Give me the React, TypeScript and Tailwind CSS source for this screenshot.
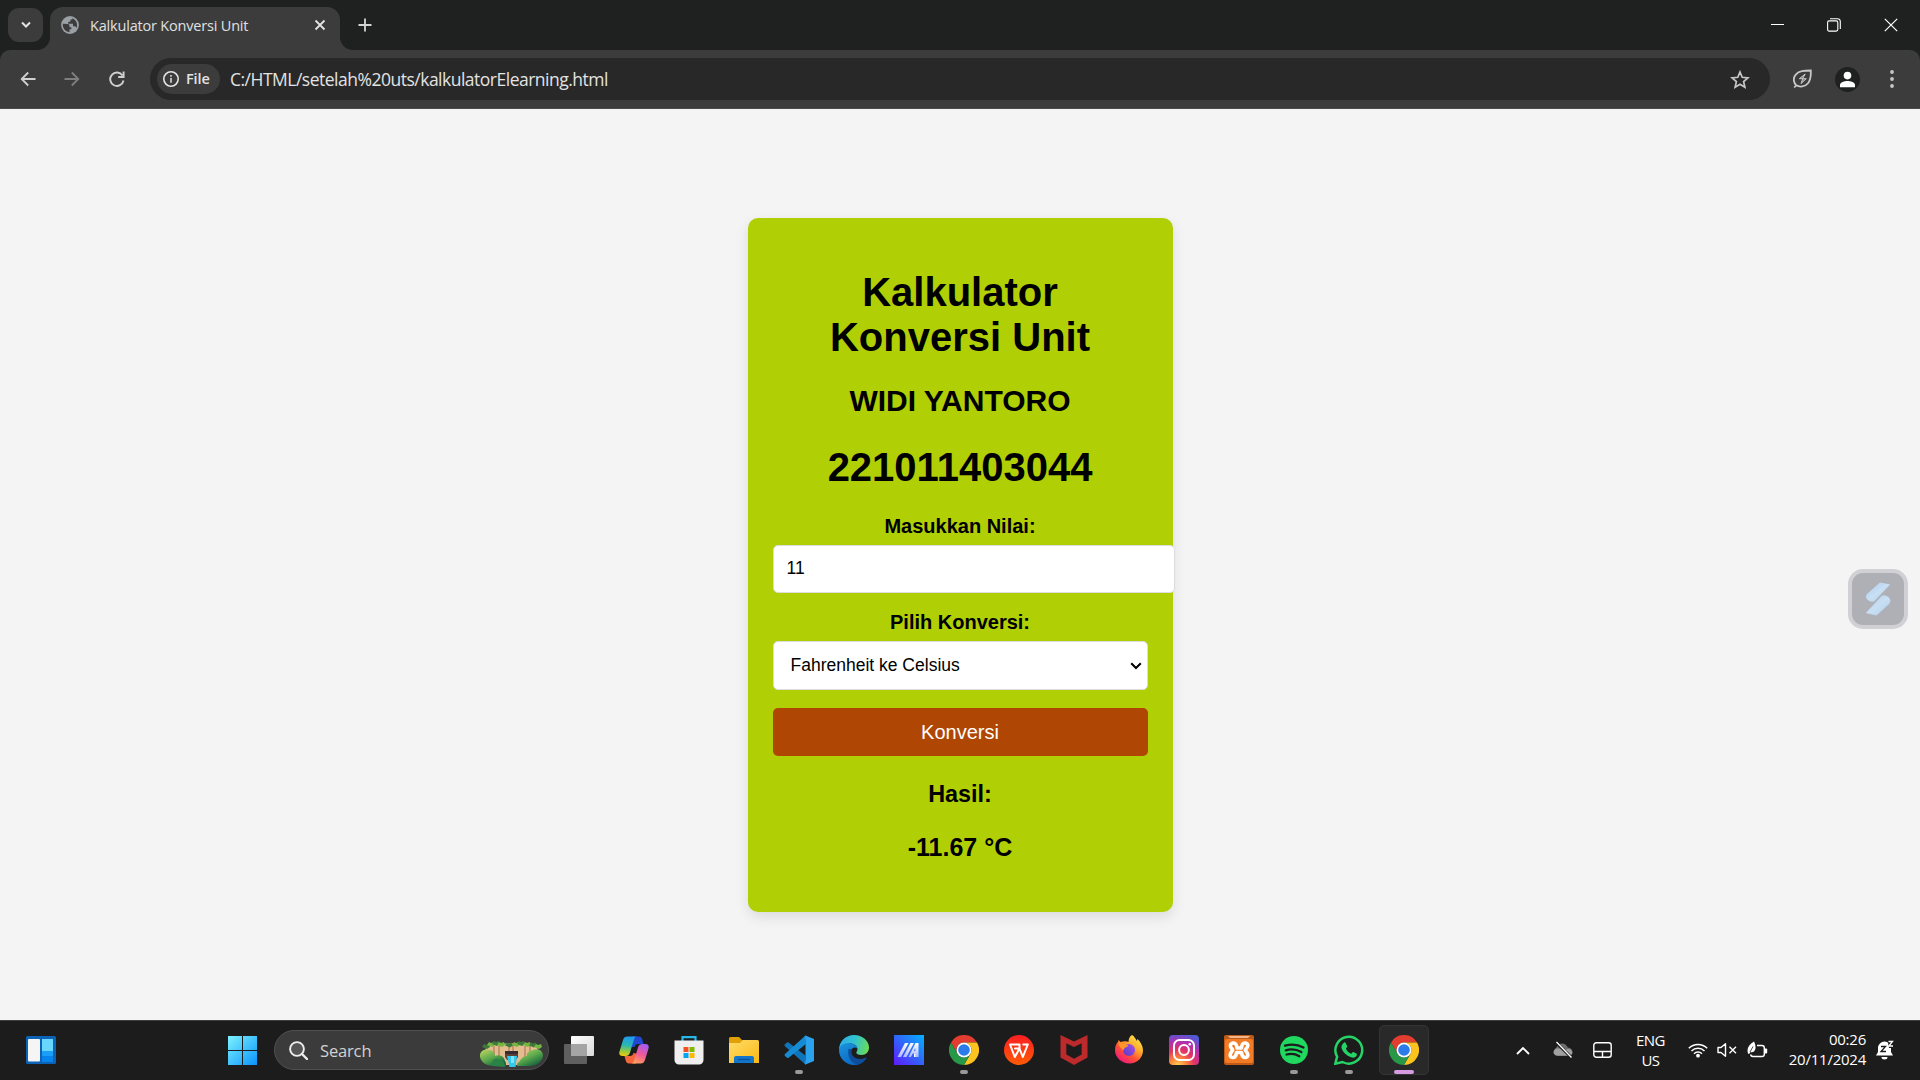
import React, { ReactNode } from "react";

function Svg({ w = 30, h = 30, children, className = "" }: { w?: number; h?: number; children: ReactNode; className?: string }) {
  return (
    <svg width={w} height={h} viewBox={`0 0 ${w} ${h}`} fill="none" className={`block shrink-0 ${className}`}>
      {children}
    </svg>
  );
}

function TabStrip() {
  return (
    <div className="flex h-[50px] bg-[#1f2121]">
      <div className="mt-2 ml-2 flex h-[34px] w-[35px] items-center justify-center rounded-[11px] bg-[#3c3c3c]">
        <Svg w={12} h={8}>
          <path d="M2 1.500l4 4 4-4" stroke="#e3e3e3" strokeWidth="2" />
        </Svg>
      </div>
      <div className="relative ml-[7px] mt-[7px] flex h-[43px] w-[290px] items-center rounded-t-[13px] bg-[#3c3c3c] pb-[7px] text-[#e0e0e0]">
        <Svg w={13} h={13} className="absolute -left-[13px] bottom-0">
          <path d="M13 0v13H0A13 13 0 0 0 13 0" fill="#3c3c3c" />
        </Svg>
        <Svg w={13} h={13} className="absolute -right-[13px] bottom-0">
          <path d="M0 0v13h13A13 13 0 0 1 0 0" fill="#3c3c3c" />
        </Svg>
        <Svg w={18} h={18} className="ml-[11px]">
          <circle cx="9" cy="9" r="8.9" fill="#9aa0a6" />
          <path d="M1.800 7.800l4.700.2c1.500 0 2 .8 2 2v1.200h1.800v2H8.500v3c-4.200-.4-7-3.800-6.700-8.400zM11.300 2.200c4 1.600 5.800 6 4.200 9.800l-1.200-1.700H12V7.700H7.200V6l2.200-.5V3.600h1.900z" fill="#3c3c3c" />
        </Svg>
        <span className="ml-[11px] mt-px w-[232px] whitespace-nowrap text-[14.500px] tracking-[-0.19px]">Kalkulator Konversi Unit</span>
        <Svg w={12} h={12} className="mr-[14px]">
          <path d="M1.500 1.500l9 9m0-9l-9 9" stroke="#e3e3e3" strokeWidth="1.800" />
        </Svg>
      </div>
      <Svg w={14} h={14} className="ml-[18px] mt-[18px]">
        <path d="M7 .5v13M.5 7h13" stroke="#d4d4d4" strokeWidth="1.800" />
      </Svg>
      <div className="ml-auto mr-[22px] flex h-[49px] items-center">
        <Svg w={13} h={13} className="mr-[43px]">
          <path d="M0 6.500h13" stroke="#fff" strokeWidth="1" />
        </Svg>
        <Svg w={14} h={14} className="mr-[43px]">
          <rect x=".6" y="2.900" width="10.200" height="10.200" rx="1.500" stroke="#fff" strokeWidth="1.100" />
          <path d="M3 .7h7.500a2.800 2.800 0 0 1 2.800 2.800V11" stroke="#fff" strokeWidth="1.100" />
        </Svg>
        <Svg w={14} h={14}>
          <path d="M.8.8l12.400 12.400m0-12.400L.8 13.200" stroke="#fff" strokeWidth="1.200" />
        </Svg>
      </div>
    </div>
  );
}

function Toolbar() {
  return (
    <div className="bg-[#1f2121]">
      <div className="flex h-[59px] items-center rounded-t-[10px] border-b border-[#4a4a4a] bg-[#3c3c3c]">
        <Svg w={16} h={16} className="ml-5">
          <path d="M15.500 8H2M8.200 1.500L1.700 8l6.500 6.500" stroke="#d0d0d0" strokeWidth="1.800" />
        </Svg>
        <Svg w={16} h={16} className="ml-[28px]">
          <path d="M.5 8H14M7.800 1.500L14.300 8l-6.500 6.500" stroke="#7e7e7e" strokeWidth="1.800" />
        </Svg>
        <Svg w={16} h={16} className="ml-[29px]">
          <path d="M13.500 4.500A6.700 6.700 0 1 0 14.500 9.500M14.600.5v5.500H9.200" stroke="#d0d0d0" strokeWidth="1.900" />
        </Svg>
        <div className="ml-[25px] flex h-[42px] w-[1620px] items-center rounded-full bg-[#282828] pl-[7px]">
          <div className="flex h-[30px] w-[63px] items-center rounded-full bg-[#3c3c3c] pl-[6px]">
            <Svg w={16} h={16}>
              <circle cx="8" cy="8" r="7.200" stroke="#e3e3e3" strokeWidth="1.600" />
              <path d="M8 7v4.800M8 4v1.800" stroke="#e3e3e3" strokeWidth="1.500" />
            </Svg>
            <span className="ml-[7px] text-[14.500px] font-semibold tracking-[-0.1px] text-[#e3e3e3]">File</span>
          </div>
          <span className="ml-[10px] whitespace-nowrap text-[17.500px] tracking-[-0.500px] text-[#e3e3e3]">C:/HTML/setelah%20uts/kalkulatorElearning.html</span>
          <Svg w={20} h={19} className="ml-auto mr-5">
            <path d="M10 2l2.200 5.300 5.700.5-4.300 3.800 1.300 5.600-4.900-3-4.900 3 1.300-5.600L2.100 7.800l5.700-.5z" stroke="#c7c7c7" strokeWidth="1.700" />
          </Svg>
        </div>
        <Svg w={20} h={20} className="ml-[23px]">
          <path d="M3.300 16.300A7.600 7.600 0 0 1 3 5.300C6 1.700 11 1.600 17.800 1.500c.2 4 .2 9-2.800 12.700-3 3.700-8.300 4.300-11.700 2.100l-2.100 2.200" stroke="#c7c7c7" strokeWidth="1.800" />
          <path d="M12.200 5L6.300 9.700h7L8 14.600l1.700-4.900z" stroke="#c7c7c7" strokeWidth="1" fill="#c7c7c7" fillOpacity=".5" />
        </Svg>
        <Svg w={25} h={25} className="ml-[22px]">
          <circle cx="12.500" cy="12.500" r="12.500" fill="#1f2121" />
          <circle cx="12.500" cy="8.600" r="3.800" fill="#fff" />
          <path d="M5 20.200v-2.400c0-2.600 4.500-3.900 7.500-3.900s7.500 1.300 7.500 3.900v2.400z" fill="#fff" />
        </Svg>
        <Svg w={4} h={20} className="ml-[30px]">
          <circle cx="2" cy="3" r="1.900" fill="#c7c7c7" />
          <circle cx="2" cy="10" r="1.900" fill="#c7c7c7" />
          <circle cx="2" cy="17" r="1.900" fill="#c7c7c7" />
        </Svg>
      </div>
    </div>
  );
}

function Calculator() {
  return (
    <div className="mt-[109px] flex h-[694px] w-[425px] flex-col rounded-[10px] bg-[#b1cf05] px-[25px] pt-[52px] text-center font-['Liberation_Sans',Arial,sans-serif] text-black shadow-[0_5px_13px_rgba(0,0,0,0.1)]">
      <h1 className="text-[40px] font-bold leading-[45px]">Kalkulator<br />Konversi Unit</h1>
      <h2 className="mt-[24px] text-[30px] font-bold leading-[34px]">WIDI YANTORO</h2>
      <h1 className="mt-[27px] text-[40px] font-bold leading-[45px]">221011403044</h1>
      <label className="mt-[25px] text-[20px] font-bold leading-[23px]">Masukkan Nilai:</label>
      <div className="mt-[7px] flex h-[48px] w-[402px] shrink-0 items-center rounded-[5px] border border-[#ddd] bg-white pl-[13px] pb-[1px] text-[17.500px]">11</div>
      <label className="mt-[18px] text-[20px] font-bold leading-[23px]">Pilih Konversi:</label>
      <div className="mt-[7px] flex h-[49px] w-full shrink-0 items-center justify-between rounded-[5px] border border-[#ddd] bg-white pl-[17px] pr-[5px] text-[17.500px]">
        Fahrenheit ke Celsius
        <Svg w={12} h={8}>
          <path d="M1.200 1.200L6 6l4.800-4.800" stroke="#000" strokeWidth="2" />
        </Svg>
      </div>
      <button className="mt-[18px] h-[48px] w-full shrink-0 rounded-[5px] bg-[#b04604] text-[20px] text-white">Konversi</button>
      <h3 className="mt-[25px] text-[23.400px] font-bold leading-[27px]">Hasil:</h3>
      <p className="mt-[25px] text-[25px] font-bold leading-[28px]">-11.67 °C</p>
    </div>
  );
}

function FloatingWidget() {
  return (
    <div className="absolute right-[12px] top-[460px] flex size-[60px] items-center justify-center rounded-[15px] border-4 border-[#d1d1d5] bg-[#afafb6]">
      <Svg w={26} h={34}>
        <defs>
          <linearGradient id="fw" x1="0" y1="0" x2="1" y2="1">
            <stop stopColor="#a9cdf0" />
            <stop offset=".5" stopColor="#c9dff3" />
            <stop offset="1" stopColor="#acd0f0" />
          </linearGradient>
        </defs>
        <path d="M15 .5l10.200 2L10 18.500c-1.500 1.700-3.500 1.600-5.500.5-4-2.200-4.500-5-2-7.500z" fill="url(#fw)" />
        <path d="M11.500 33.500L.8 31 16 14.500c1.500-1.500 4-1.400 6-.3 4 2.200 4.300 5.500 1.800 8z" fill="url(#fw)" />
      </Svg>
    </div>
  );
}

function WidgetsIcon() {
  return (
    <Svg w={30} h={28}>
      <rect width="30" height="28" rx="1.500" fill="#0c62b5" />
      <rect x="2" y="3" width="12" height="22.500" rx="1" fill="#f5f5f5" />
      <path d="M16 3h11v12H16z" fill="#69d6ff" />
      <path d="M16 15h11v5.500H16z" fill="#1d9dfa" />
      <path d="M16 20.500h11V26H16z" fill="#0584ee" />
    </Svg>
  );
}

function StartIcon() {
  return (
    <Svg w={29} h={29}>
      <defs>
        <linearGradient id="st" x1="0" y1="0" x2="29" y2="29" gradientUnits="userSpaceOnUse">
          <stop stopColor="#7df3ff" />
          <stop offset="1" stopColor="#0a93fb" />
        </linearGradient>
      </defs>
      <path d="M0 0h14v14H0zM15 0h14v14H15zM0 15h14v14H0zM15 15h14v14H15z" fill="url(#st)" />
    </Svg>
  );
}

function SearchArt() {
  return (
    <Svg w={63} h={28}>
      <defs>
        <linearGradient id="bush" x1="0" y1="0" x2=".7" y2="1">
          <stop stopColor="#c3d860" />
          <stop offset=".55" stopColor="#5aa84c" />
          <stop offset="1" stopColor="#12613c" />
        </linearGradient>
      </defs>
      <path d="M6 6c8-3 42-4 51 0l2 12-15 7H20L5 18z" fill="#e3bc90" />
      <path d="M14 6v10M19 6v13M45 6v12M50 6v10M33 5v6M29 5v6" stroke="#b5855c" strokeWidth="1.400" />
      <path d="M25 11h13v6l-2 3H27l-2-3z" fill="#5d4038" />
      <path d="M25 11h13v3H25z" fill="#362c30" />
      <path d="M27 16h10l-1.500 11h-6z" fill="#33c9ee" />
      <path d="M31 16h3v7h-3z" fill="#7de4ff" />
      {[[5, 6], [10, 4], [15, 3], [20, 4], [28, 4.5], [35, 4], [40, 3], [46, 4], [52, 4.5], [57, 6]].map(([x, y], i) => (
        <path key={i} d={`M${x - 3} ${y + 1}l2-3 2 1 3-1 1 3-3 2z`} fill={i % 2 ? "#75b641" : "#3d7a39"} />
      ))}
      <path d="M0 17C-1 11 5 8 10 10c4 1 5 4 5 6 5-2 9 0 10 5 1 1 1 3 1 5H14C6 26 1 22 0 17z" fill="url(#bush)" />
      <path d="M63 16c0-6-5-8-10-6-5 1-7 4-6 6-4 0-6 3-8 6-2 1-2 2-2 4h11c9 0 14-4 15-10z" fill="url(#bush)" />
      <path d="M12 26c-1-5 2-8 6-7s7 3 7 8z" fill="#2b8247" />
    </Svg>
  );
}

function TaskViewIcon() {
  return (
    <Svg w={30} h={28}>
      <defs>
        <linearGradient id="tv" x1="0" y1="0" x2="1" y2="1"><stop stopColor="#fff" /><stop offset="1" stopColor="#d9d9d9" /></linearGradient>
      </defs>
      <rect x="7" y="0" width="23" height="20" rx="1" fill="url(#tv)" />
      <rect x="0" y="8" width="23" height="20" rx="1" fill="#5f5f5f" />
      <path d="M7 8h16v12H7z" fill="#a4a4a4" />
    </Svg>
  );
}

function CopilotIcon() {
  return (
    <Svg>
      <defs>
        <linearGradient id="cp1" x1=".4" y1="0" x2=".3" y2="1"><stop stopColor="#1e9cf0" /><stop offset=".45" stopColor="#2cb7b0" /><stop offset=".75" stopColor="#92c942" /><stop offset="1" stopColor="#f0ca10" /></linearGradient>
        <linearGradient id="cp2" x1=".7" y1="0" x2=".3" y2="1"><stop stopColor="#a35cf0" /><stop offset=".5" stopColor="#f0589a" /><stop offset="1" stopColor="#ffa05a" /></linearGradient>
      </defs>
      <path d="M13 1.500h7c2 0 2.700 1 3.300 3l1.200 4.500H19c-2 0-3 1-3.500 3L13 12z" fill="#2148d2" />
      <path d="M17 28.500h-7c-2 0-2.700-1-3.300-3L5.500 21H11c2 0 3-1 3.500-3l2.500.5z" fill="#f4673c" />
      <path d="M8.500 1.500H18c-2 .2-2.600 1.500-3.200 3.500L11 17.500c-.8 2.500-2 3.500-4.500 3.500H3.500C.7 21-.2 19 .5 16.500L4 5c.8-2.500 2-3.500 4.500-3.500z" fill="url(#cp1)" />
      <path d="M21.500 28.500H12c2-.2 2.600-1.500 3.200-3.500L19 12.500c.8-2.500 2-3.500 4.500-3.500h3c2.800 0 3.700 2 3 4.500L26 25c-.8 2.500-2 3.500-4.500 3.500z" fill="url(#cp2)" />
    </Svg>
  );
}

function StoreIcon() {
  return (
    <Svg>
      <path d="M8.500 6V2.200h13V6" stroke="#27b7e8" strokeWidth="2.200" />
      <path d="M.5 5.500h29V25a4.500 4.500 0 0 1-4.500 4.500H5A4.500 4.500 0 0 1 .5 25z" fill="#efefef" />
      <path d="M9.500 12h5v5h-5z" fill="#f25022" />
      <path d="M15.500 12h5v5h-5z" fill="#7fba00" />
      <path d="M9.500 18h5v5h-5z" fill="#00a4ef" />
      <path d="M15.500 18h5v5h-5z" fill="#ffb900" />
    </Svg>
  );
}

function FolderIcon() {
  return (
    <Svg>
      <defs>
        <linearGradient id="fd" x1="0" y1="0" x2="1" y2="1"><stop stopColor="#ffdc6b" /><stop offset="1" stopColor="#fbb912" /></linearGradient>
      </defs>
      <path d="M0 3.500Q0 2 1.500 2H10l3 3h7v5H0z" fill="#e0a106" />
      <path d="M0 8h11l3-3h14.500Q30 5 30 6.500V28H0z" fill="url(#fd)" />
      <path d="M5 28v-5q0-2 2-2h16q2 0 2 2v5z" fill="#1275ca" />
      <path d="M9 24.500h12" stroke="#0a4f9c" strokeWidth="1.200" />
    </Svg>
  );
}

function VsCodeIcon() {
  return (
    <Svg>
      <path d="M21.500.5L30 4v22l-8.500 3.500z" fill="#2ba2ee" />
      <path d="M21.500 29.500L1 11.200q-1-1 0-2L3 7.400q.8-.5 1.600 0L22 21z" fill="#1074ba" />
      <path d="M21.500.5L1 19q-1 1 0 2l2 1.700q.8.500 1.600 0L22 9z" fill="#168bd3" />
      <path d="M22 .3v29.400c-.6-.2-1-.7-1.500-1.200l1.500-5V6.500L20.500 1.700z" fill="#2398e2" />
    </Svg>
  );
}

function EdgeIcon() {
  return (
    <Svg>
      <defs>
        <linearGradient id="eg1" x1="0" y1=".4" x2="1" y2=".6"><stop stopColor="#2aaee8" /><stop offset=".5" stopColor="#33c3cd" /><stop offset="1" stopColor="#6bdc52" /></linearGradient>
        <linearGradient id="eg2" x1="0" y1="0" x2=".6" y2="1"><stop stopColor="#1b95dc" /><stop offset="1" stopColor="#0a66c4" /></linearGradient>
      </defs>
      <path d="M15 0c8.500 0 15 6 15 12.500 0 4.500-3 7.500-7.500 7.500-3.500 0-5.200-1.300-5.200-2.500 0-.8 1.200-1.500 1.200-3.500 0-3-3-5.500-7.500-5.500C5 8.500 0 13 0 15 0 6.500 6.500 0 15 0z" fill="url(#eg1)" />
      <path d="M0 15c0-4 4.500-7 9.500-7 5.500 0 9 3 9 6-1.500-2.500-6.500-2-6.500 3 0 6 6.500 11 13.500 8.700C22.500 28.500 19 30 15 30 6.500 30 0 23 0 15z" fill="url(#eg2)" />
      <path d="M9.500 14C8 21 12 29 19 29.500c3-.8 6-2.500 8.500-6 .5-.8-.2-1.200-1-.8-6.500 3-13 .3-14-4.700-.2-1.800 0-3 .5-4z" fill="#0d4d9a" />
    </Svg>
  );
}

function MyAsusIcon() {
  return (
    <Svg>
      <defs>
        <linearGradient id="ma" x1="0" y1="1" x2="1" y2="0"><stop stopColor="#6218fb" /><stop offset=".5" stopColor="#3165fb" /><stop offset="1" stopColor="#02b3ff" /></linearGradient>
        <linearGradient id="ma2" x1="0" y1="0" x2="0" y2="1"><stop stopColor="#fff" /><stop offset="1" stopColor="#a9b8ff" /></linearGradient>
      </defs>
      <path d="M0 0h30v30H0z" fill="url(#ma)" />
      <path d="M3.500 22L11 8h3.500L7 22z" fill="url(#ma2)" />
      <path d="M9 22l7.500-14H20l-7.500 14zM14.500 22l7-14h3v14h-3.200v-3.500h-2.600l-1.700 3.500zM19.800 16h1.500v-3z" fill="url(#ma2)" fillRule="evenodd" />
      <path d="M20 18.500h1.500V22H20z" fill="#fff" />
    </Svg>
  );
}

function ChromeIcon() {
  return (
    <Svg>
      <path d="M2 7.500A15 15 0 0 1 28 7.500H15a7.500 7.500 0 0 0-6.500 11.200z" fill="#e23d30" />
      <path d="M28 7.500A15 15 0 0 1 15 30l6.500-11.300A7.500 7.500 0 0 0 15 7.500z" fill="#fcc31e" />
      <path d="M2 7.500A15 15 0 0 0 15 30l6.500-11.300a7.500 7.500 0 0 1-13 0z" fill="#279847" />
      <circle cx="15" cy="15" r="7.500" fill="#fff" />
      <circle cx="15" cy="15" r="5.800" fill="#2b7bea" />
    </Svg>
  );
}

function WpsIcon() {
  return (
    <Svg>
      <defs>
        <linearGradient id="wp" x1="0" y1="0" x2="0" y2="1"><stop stopColor="#fb1d22" /><stop offset="1" stopColor="#ff5b05" /></linearGradient>
      </defs>
      <circle cx="15" cy="15" r="15" fill="url(#wp)" />
      <path d="M11 13.500h4.500V9.500H6L10.800 22l4.700-8.500L18.800 22l5-12.500h-4.600" stroke="#fff" strokeWidth="2" strokeLinejoin="round" strokeLinecap="round" />
    </Svg>
  );
}

function McAfeeIcon() {
  return (
    <Svg>
      <path d="M1.500 0L15 6.500 28.500 0v22.500L15 30 1.500 22.500zM7.300 8.300v11.200L15 23.800l7.700-4.300V8.300L15 12z" fill="#bd2a2c" fillRule="evenodd" />
    </Svg>
  );
}

function FirefoxIcon() {
  return (
    <Svg>
      <defs>
        <linearGradient id="ff1" x1=".85" y1=".05" x2=".2" y2=".95"><stop stopColor="#ffe74a" /><stop offset=".35" stopColor="#ffad2b" /><stop offset=".65" stopColor="#ff5036" /><stop offset="1" stopColor="#ef1680" /></linearGradient>
        <linearGradient id="ff2" x1="0" y1="1" x2="1" y2="0"><stop stopColor="#533bc8" /><stop offset="1" stopColor="#a952e5" /></linearGradient>
      </defs>
      <path d="M18 0c2 1 4 4 4.500 6l1-2c3 3 5.300 6.500 5.500 11 0 8-6 13.500-13.500 13.500S1 23 1 15c0-4 1.500-6.500 3-8l.5-2 2 2c3-1 6-1 8 0 0-3 1-5.500 3.500-7z" fill="url(#ff1)" />
      <circle cx="15" cy="15" r="6" fill="url(#ff2)" />
      <path d="M4.500 7C8 7.500 9 9 13.500 10c1 .2 1 1.500-1.500 2.200-1.700.5-2 2-2.500 3.300-2-2.500-5-3-5-8.500z" fill="#ff9528" />
    </Svg>
  );
}

function InstagramIcon() {
  return (
    <Svg>
      <defs>
        <radialGradient id="ig" cx=".3" cy="1.050" r="1.100"><stop stopColor="#ffd65a" /><stop offset=".25" stopColor="#fb8a39" /><stop offset=".5" stopColor="#e33463" /><stop offset=".75" stopColor="#b52eae" /><stop offset="1" stopColor="#5259d4" /></radialGradient>
      </defs>
      <rect width="30" height="30" rx="4" fill="url(#ig)" />
      <rect x="5" y="5" width="20" height="20" rx="5.500" stroke="#fff" strokeWidth="2" />
      <circle cx="15" cy="15" r="4.900" stroke="#fff" strokeWidth="2" />
      <circle cx="20.800" cy="9.200" r="1.300" fill="#fff" />
    </Svg>
  );
}

function XamppIcon() {
  return (
    <Svg>
      <rect width="30" height="30" rx="2" fill="#c05a16" />
      <rect x="1" y="4" width="28" height="24" rx="2" fill="#f27b25" />
      <path d="M4 1h22l-2 2H6z" fill="#f0b88c" />
      <path d="M9 8q3.500-.5 4 5h4.500q.3-5.500 4-5 3.500 1 1.800 4l-2 3 2.200 3.500q1.300 3.500-2 4-3.500 0-4-5h-5q-.5 5-4 5-3.300-.5-2-4L8.700 15l-2-3Q5.500 9 9 8z" stroke="#fff" strokeWidth="3.600" strokeLinejoin="round" />
    </Svg>
  );
}

function SpotifyIcon() {
  return (
    <Svg>
      <circle cx="15" cy="15" r="14" fill="#20d760" />
      <path d="M6 10.600c6-1.700 13-1.200 18.500 1.900M6.800 15.300c5.300-1.500 11-.8 15.600 1.800M7.500 19.500c4.500-1.100 9-.6 12.800 1.700" stroke="#1c1c1c" strokeWidth="2.300" strokeLinecap="round" />
    </Svg>
  );
}

function WhatsAppIcon() {
  return (
    <Svg>
      <path d="M1.300 28.700l1.800-7A13.400 13.400 0 1 1 8.500 27z" stroke="#25d366" strokeWidth="2.500" />
      <path d="M9.800 7.800c.6-.6 1.600-.6 1.900.1l1.500 3.400c.3.800-1.400 1.900-1.200 2.500.8 2.200 2.700 3.900 5 4.900.7.200 1.500-2 2.300-1.700l3.100 1.500c.8.400.4 1.900 0 2.600-1 1.500-3.200 1.900-5.200 1.200-5-1.600-8.500-5.500-9.600-9-.5-2.200.5-4.100 2.200-5.500z" fill="#25d366" />
    </Svg>
  );
}

const apps: { icon: ReactNode; state?: "open" | "active" }[] = [
  { icon: <TaskViewIcon /> },
  { icon: <CopilotIcon /> },
  { icon: <StoreIcon /> },
  { icon: <FolderIcon /> },
  { icon: <VsCodeIcon />, state: "open" },
  { icon: <EdgeIcon /> },
  { icon: <MyAsusIcon /> },
  { icon: <ChromeIcon />, state: "open" },
  { icon: <WpsIcon /> },
  { icon: <McAfeeIcon /> },
  { icon: <FirefoxIcon /> },
  { icon: <InstagramIcon /> },
  { icon: <XamppIcon /> },
  { icon: <SpotifyIcon />, state: "open" },
  { icon: <WhatsAppIcon />, state: "open" },
  { icon: <ChromeIcon />, state: "active" },
];

function Tray() {
  return (
    <div className="ml-auto flex items-center text-[15px] leading-[20px] text-white">
      <Svg w={14} h={9} className="mr-[23px]">
        <path d="M1 8l6-6 6 6" stroke="#fff" strokeWidth="1.900" />
      </Svg>
      <Svg w={20} h={18} className="mr-5">
        <path d="M4.500 14.500A4.300 4.300 0 0 1 3.500 6.500C5 2 12 .5 14.800 6.500c6 .5 6.200 8 1 8z" fill="#6d6d6d" />
        <path d="M4.500 14.800c-5-.5-5.500-6-.5-7.200 3-.6 4 .4 6.500 2l4-1.500c5-.6 7 6.200 1.500 6.700z" fill="#a0a0a0" />
        <path d="M3 1.500l15.500 15" stroke="#1c1c1c" strokeWidth="3" />
        <path d="M3.500 1l15 15.500" stroke="#fff" strokeWidth="1.300" />
      </Svg>
      <Svg w={19} h={16}>
        <rect x=".8" y=".8" width="17.400" height="14.400" rx="2.500" stroke="#fff" strokeWidth="1.400" />
        <path d="M1 9.500h17M9.500 9.500V15" stroke="#fff" strokeWidth="1.400" />
      </Svg>
      <div className="ml-[23px] w-[31px] whitespace-nowrap text-center tracking-[-0.500px]">ENG<br />US</div>
      <Svg w={20} h={16} className="ml-[22px]">
        <path d="M.8 6.200a13 13 0 0 1 18.400 0M3.500 9a9.200 9.200 0 0 1 13 0M6 11.700a5.700 5.700 0 0 1 8 0" stroke="#fff" strokeWidth="1.500" />
        <circle cx="10" cy="13.700" r="1.900" fill="#fff" />
      </Svg>
      <Svg w={20} h={16} className="ml-[9px]">
        <path d="M1 5.500h3L8.500 1.800v12.400L4 10.500H1z" stroke="#fff" strokeWidth="1.400" strokeLinejoin="round" />
        <path d="M12.500 4.800l6.500 6.500m0-6.500l-6.500 6.500" stroke="#fff" strokeWidth="1.400" />
      </Svg>
      <Svg w={21} h={18} className="ml-[10px]">
        <path d="M10 4.500h5q2.300 0 2.300 2.300v6.400q0 2.300-2.300 2.300H6q-2 0-2.500-2" stroke="#fff" strokeWidth="1.400" />
        <path d="M18 7.500h1.200q1 0 1 1v3q0 1-1 1H18z" fill="#fff" />
        <path d="M7 .5C8.800 4 9.300 8 7 10.500c-1.500 1-2.500.8-3.500.5L2 13l-1-.5C-.5 8 1.500 3.500 7 .5z" fill="#fff" />
        <path d="M3 11l3-5.500" stroke="#1c1c1c" strokeWidth=".8" />
      </Svg>
      <div className="mb-[3px] ml-[6px] w-[92px] whitespace-nowrap text-right tracking-[-0.240px]">00:26<br />20/11/2024</div>
      <Svg w={18} h={20} className="ml-[10px] mr-[26px]">
        <path d="M2 8a6.500 6.500 0 0 1 13 0v4l2 3.500H0L2 12z" fill="#fff" />
        <path d="M5.500 17h6a3 2.500 0 0 1-6 0z" fill="#fff" />
        <path d="M11.500 0H18v8h-5z" fill="#1c1c1c" />
        <path d="M12.500 1.500h4L12.800 6H17" stroke="#fff" strokeWidth="1.300" />
        <path d="M5 6.500h4.500l-4.500 5h5" stroke="#1c1c1c" strokeWidth="1.300" />
      </Svg>
    </div>
  );
}

function Taskbar() {
  return (
    <div className="flex h-[60px] shrink-0 items-center border-t border-[#3d4040] bg-[#1c1c1c] pb-px">
      <div className="ml-[26px]"><WidgetsIcon /></div>
      <div className="ml-[172px]"><StartIcon /></div>
      <div className="ml-[17px] flex h-10 w-[275px] items-center rounded-full border border-[#505050] bg-[#3b3b3b] pl-[14px]">
        <Svg w={19} h={19}>
          <circle cx="8" cy="8" r="6.900" fill="#555" stroke="#ededed" strokeWidth="1.900" />
          <path d="M13 13l5 5" stroke="#ededed" strokeWidth="2.400" strokeLinecap="round" />
        </Svg>
        <span className="ml-[12px] mt-[2px] text-[16.500px] tracking-[-0.150px] text-[#d2d2d2]">Search</span>
        <div className="ml-auto mr-[5px] mt-[7px]"><SearchArt /></div>
      </div>
      <div className="ml-[2px] flex">
        {apps.map(({ icon, state }, i) => (
          <div key={i} className="flex h-[50px] w-[55px] justify-center">
            <div className={`relative flex size-[50px] items-center justify-center rounded-[5px] ${state === "active" ? "border border-[#353535] bg-[#292929]" : ""}`}>
              {icon}
              {state === "open" && <div className="absolute bottom-[1px] h-1 w-2 rounded-full bg-[#999]" />}
              {state === "active" && <div className="absolute bottom-0 h-1 w-5 rounded-full bg-[#d69be0]" />}
            </div>
          </div>
        ))}
      </div>
      <Tray />
    </div>
  );
}

export default function App() {
  return (
    <div className="flex h-[1080px] w-[1920px] flex-col overflow-hidden font-['Open_Sans','Noto_Sans',sans-serif]">
      <TabStrip />
      <Toolbar />
      <main className="relative flex flex-1 justify-center bg-[#f4f4f4]">
        <Calculator />
        <FloatingWidget />
      </main>
      <Taskbar />
    </div>
  );
}
